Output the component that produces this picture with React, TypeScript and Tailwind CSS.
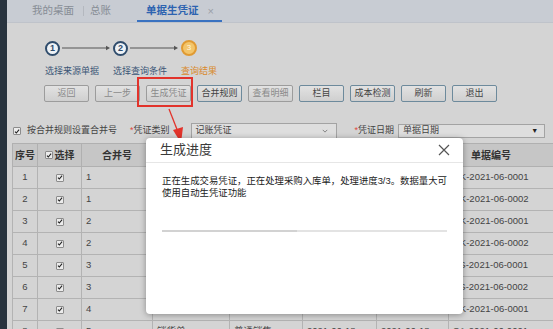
import React from 'react'

type Row = {
  no: number
  merge: string
  type: string
  biz: string
  d1: string
  d2: string
  code: string
}

const rows: Row[] = [
  { no: 1, merge: '1', type: '采购入库单', biz: '普通采购', d1: '2021-06-18', d2: '2021-06-18', code: 'RK-2021-06-0001' },
  { no: 2, merge: '1', type: '采购入库单', biz: '普通采购', d1: '2021-06-18', d2: '2021-06-18', code: 'RK-2021-06-0002' },
  { no: 3, merge: '2', type: '销售出库单', biz: '普通销售', d1: '2021-06-18', d2: '2021-06-18', code: 'CK-2021-06-0001' },
  { no: 4, merge: '2', type: '销售出库单', biz: '普通销售', d1: '2021-06-18', d2: '2021-06-18', code: 'CK-2021-06-0002' },
  { no: 5, merge: '3', type: '销货单', biz: '普通销售', d1: '2021-06-18', d2: '2021-06-18', code: 'XS-2021-06-0001' },
  { no: 6, merge: '3', type: '销货单', biz: '普通销售', d1: '2021-06-18', d2: '2021-06-18', code: 'XS-2021-06-0002' },
  { no: 7, merge: '4', type: '销售出库单', biz: '普通销售', d1: '2021-06-18', d2: '2021-06-18', code: 'CK-2021-06-0001' },
  { no: 8, merge: '5', type: '销货单', biz: '普通销售', d1: '2021-06-18', d2: '2021-06-18', code: 'SA-2021-06-0001' },
]

const buttons: { label: string; off?: boolean }[] = [
  { label: '返回', off: true },
  { label: '上一步', off: true },
  { label: '生成凭证', off: true },
  { label: '合并规则' },
  { label: '查看明细', off: true },
  { label: '栏目' },
  { label: '成本检测' },
  { label: '刷新' },
  { label: '退出' },
]

function Check() {
  return (
    <span className="inline-flex h-[8px] w-[8px] shrink-0 items-center justify-center rounded-[1px] border border-[#8c8c8c] bg-[#ececec]">
      <svg viewBox="0 0 8 8" className="h-[7px] w-[7px]" aria-hidden>
        <path d="M1.3 4.2 3.1 6 6.8 1.6" fill="none" stroke="#222" strokeWidth="1.5" />
      </svg>
    </span>
  )
}

function Connector() {
  return (
    <svg viewBox="0 0 53 8" className="h-[8px] w-[53px]" aria-hidden>
      <line x1="2" y1="4" x2="48" y2="4" stroke="#555" strokeWidth="1" />
      <path d="M46 1.8 50 4 46 6.2z" fill="#555" />
    </svg>
  )
}

function Step({ n, done }: { n: number; done: boolean }) {
  return done ? (
    <span className="flex h-[15px] w-[15px] items-center justify-center rounded-full border-2 border-[#2f4c6c] bg-[#eef2f6] text-[9px] font-bold leading-none text-[#2f4c6c]">
      {n}
    </span>
  ) : (
    <span className="flex h-[16px] w-[16px] items-center justify-center rounded-full border-2 border-[#e09a32] bg-[#f3c56a] text-[8px] leading-none text-[#fff6e0]">
      {n}
    </span>
  )
}

export default function App() {
  return (
    <div className="relative flex h-[329px] w-[553px] overflow-hidden bg-[#d4d4d4] font-['Liberation_Sans','Noto_Sans_CJK_SC',sans-serif] text-[#333]">
      {/* left dark strip */}
      <div className="w-[7px] shrink-0 bg-[#28333e]" />

      <div className="flex min-w-0 flex-1 flex-col">
        {/* tab bar */}
        <div className="flex h-[23px] shrink-0 items-stretch whitespace-nowrap border-b border-[#bfc3ca] bg-[#c8ccd3] text-[10.5px]">
          <span className="ml-[25px] flex items-center text-[#878c95]">我的桌面</span>
          <span className="my-[6px] ml-[9px] w-px bg-[#b4b8bf]" />
          <span className="ml-[6px] flex items-center text-[#878c95]">总账</span>
          <div className="ml-[26px] flex w-[85px] items-center gap-[9px] border-b-2 border-[#3a72c0] pl-[9px] pt-[2px] font-bold text-[#2d63b0]">
            <span>单据生凭证</span>
            <span className="text-[11px] font-normal text-[#9aa0a8]">×</span>
          </div>
        </div>

        <div className="flex flex-col pl-[5px]">
          {/* steps */}
          <div className="ml-[33px] mt-[17px] flex items-center">
            <Step n={1} done />
            <Connector />
            <Step n={2} done />
            <Connector />
            <Step n={3} done={false} />
          </div>
          <div className="ml-[33px] mt-[9px] flex whitespace-nowrap text-[9px] leading-[12px]">
            <span className="w-[68px] text-[#3b5676]">选择来源单据</span>
            <span className="w-[68px] text-[#3b5676]">选择查询条件</span>
            <span className="text-[#d98a2c]">查询结果</span>
          </div>

          {/* buttons */}
          <div className="ml-[32px] mt-[8px] flex gap-[6px]">
            {buttons.map((b) => (
              <button
                key={b.label}
                className={`flex h-[17px] w-[45px] items-center justify-center whitespace-nowrap rounded-[2px] border bg-gradient-to-b from-[#e2e2e2] to-[#cfcfcf] text-[9px] leading-none ${
                  b.off ? 'border-[#9c9c9c] text-[#8a8a8a]' : 'border-[#6d8a9c] text-[#444]'
                }`}
              >
                {b.label}
              </button>
            ))}
          </div>

          {/* filter row */}
          <div className="mt-[21px] flex h-[16px] items-center whitespace-nowrap text-[9px] text-[#444]">
            <span className="ml-[1px] flex">
              <Check />
            </span>
            <span className="ml-[6px] shrink-0">按合并规则设置合并号</span>
            <span className="ml-[13px] shrink-0">
              <span className="text-[#e0463c]">*</span>凭证类别
            </span>
            <div className="ml-[21px] flex h-[16px] w-[146px] shrink-0 items-center justify-between border border-[#a3a3a3] bg-[#dedede] px-[4px]">
              <span>记账凭证</span>
              <svg viewBox="0 0 8 5" className="mr-[4px] h-[4px] w-[6px]" aria-hidden>
                <path d="M1 1 4 4 7 1" fill="none" stroke="#666" strokeWidth="1" />
              </svg>
            </div>
            <span className="ml-[18px] shrink-0">
              <span className="text-[#e0463c]">*</span>凭证日期
            </span>
            <div className="ml-[4px] flex h-[14px] w-[147px] shrink-0 items-center justify-between border border-[#a3a3a3] bg-[#dedede] px-[4px]">
              <span>单据日期</span>
              <span className="mr-[2px] text-[7px] text-[#222]">▼</span>
            </div>
          </div>

          {/* table */}
          <table className="mt-[4px] w-[585px] table-fixed border-collapse whitespace-nowrap text-[9.5px]">
            <colgroup>
              <col className="w-[25px]" />
              <col className="w-[44px]" />
              <col className="w-[71px]" />
              <col className="w-[77px]" />
              <col className="w-[73px]" />
              <col className="w-[74px]" />
              <col className="w-[72px]" />
              <col className="w-[149px]" />
            </colgroup>
            <thead>
              <tr className="h-[23px] bg-[#c6c6c6] text-[10px] font-bold">
                <th className="border border-[#b0b0b0]">序号</th>
                <th className="border border-[#b0b0b0]">
                  <span className="flex items-center justify-center gap-[2px]">
                    <Check />
                    选择
                  </span>
                </th>
                <th className="border border-[#b0b0b0]">合并号</th>
                <th className="border border-[#b0b0b0]">单据类型</th>
                <th className="border border-[#b0b0b0]">业务类型</th>
                <th className="border border-[#b0b0b0]">单据日期</th>
                <th className="border border-[#b0b0b0]">入库日期</th>
                <th className="border border-[#b0b0b0] pl-[22px] text-left">单据编号</th>
              </tr>
            </thead>
            <tbody>
              {rows.map((r) => (
                <tr key={r.no} className="h-[22px] bg-[#d4d4d4] text-[#444]">
                  <td className="border border-[#b3b3b3] text-center">{r.no}</td>
                  <td className="border border-[#b3b3b3] text-center">
                    <span className="inline-flex translate-y-[1px]">
                      <Check />
                    </span>
                  </td>
                  <td className="border border-[#b3b3b3] pl-[4px]">{r.merge}</td>
                  <td className="border border-[#b3b3b3] pl-[4px]">{r.type}</td>
                  <td className="border border-[#b3b3b3] pl-[4px]">{r.biz}</td>
                  <td className="border border-[#b3b3b3] pl-[4px]">{r.d1}</td>
                  <td className="border border-[#b3b3b3] pl-[4px]">{r.d2}</td>
                  <td className="border border-[#b3b3b3] pl-[4px]">{r.code}</td>
                </tr>
              ))}
            </tbody>
          </table>
        </div>
      </div>

      {/* annotation: red highlight + arrow */}
      <div className="absolute left-[137px] top-[77px] h-[30px] w-[56px] border-2 border-[#e2332b]" />
      <svg className="absolute left-[164px] top-[106px] h-[40px] w-[24px]" viewBox="0 0 24 40" aria-hidden>
        <line x1="5" y1="3" x2="14" y2="26" stroke="#e2332b" strokeWidth="1.3" />
        <path d="M9 24 19 21 17 37z" fill="#e2332b" />
      </svg>

      {/* progress dialog */}
      <div className="absolute left-[146px] top-[138px] flex h-[176px] w-[317px] flex-col rounded-[4px] bg-white shadow-[0_1px_6px_rgba(0,0,0,0.35)]">
        <div className="flex h-[25px] shrink-0 items-center justify-between border-b border-[#e6e6e6] pl-[14px] pr-[13px]">
          <span className="text-[13px] text-[#3a3a3a]">生成进度</span>
          <svg viewBox="0 0 12 12" className="h-[12px] w-[12px]" aria-hidden>
            <path d="M1 1 11 11M11 1 1 11" stroke="#555" strokeWidth="1.2" />
          </svg>
        </div>
        <div className="flex flex-col px-[16px] pt-[12px]">
          <p className="text-[9.4px] leading-[11.5px] text-[#222]">
            正在生成交易凭证，正在处理采购入库单，处理进度3/3。数据量大可
            <br />
            使用自动生凭证功能
          </p>
          <div className="mt-[32px] flex h-[2px] w-[285px] bg-[#e3e3e3]">
            <div className="h-full w-[135px] bg-[#d2d2d2]" />
          </div>
        </div>
      </div>
    </div>
  )
}
